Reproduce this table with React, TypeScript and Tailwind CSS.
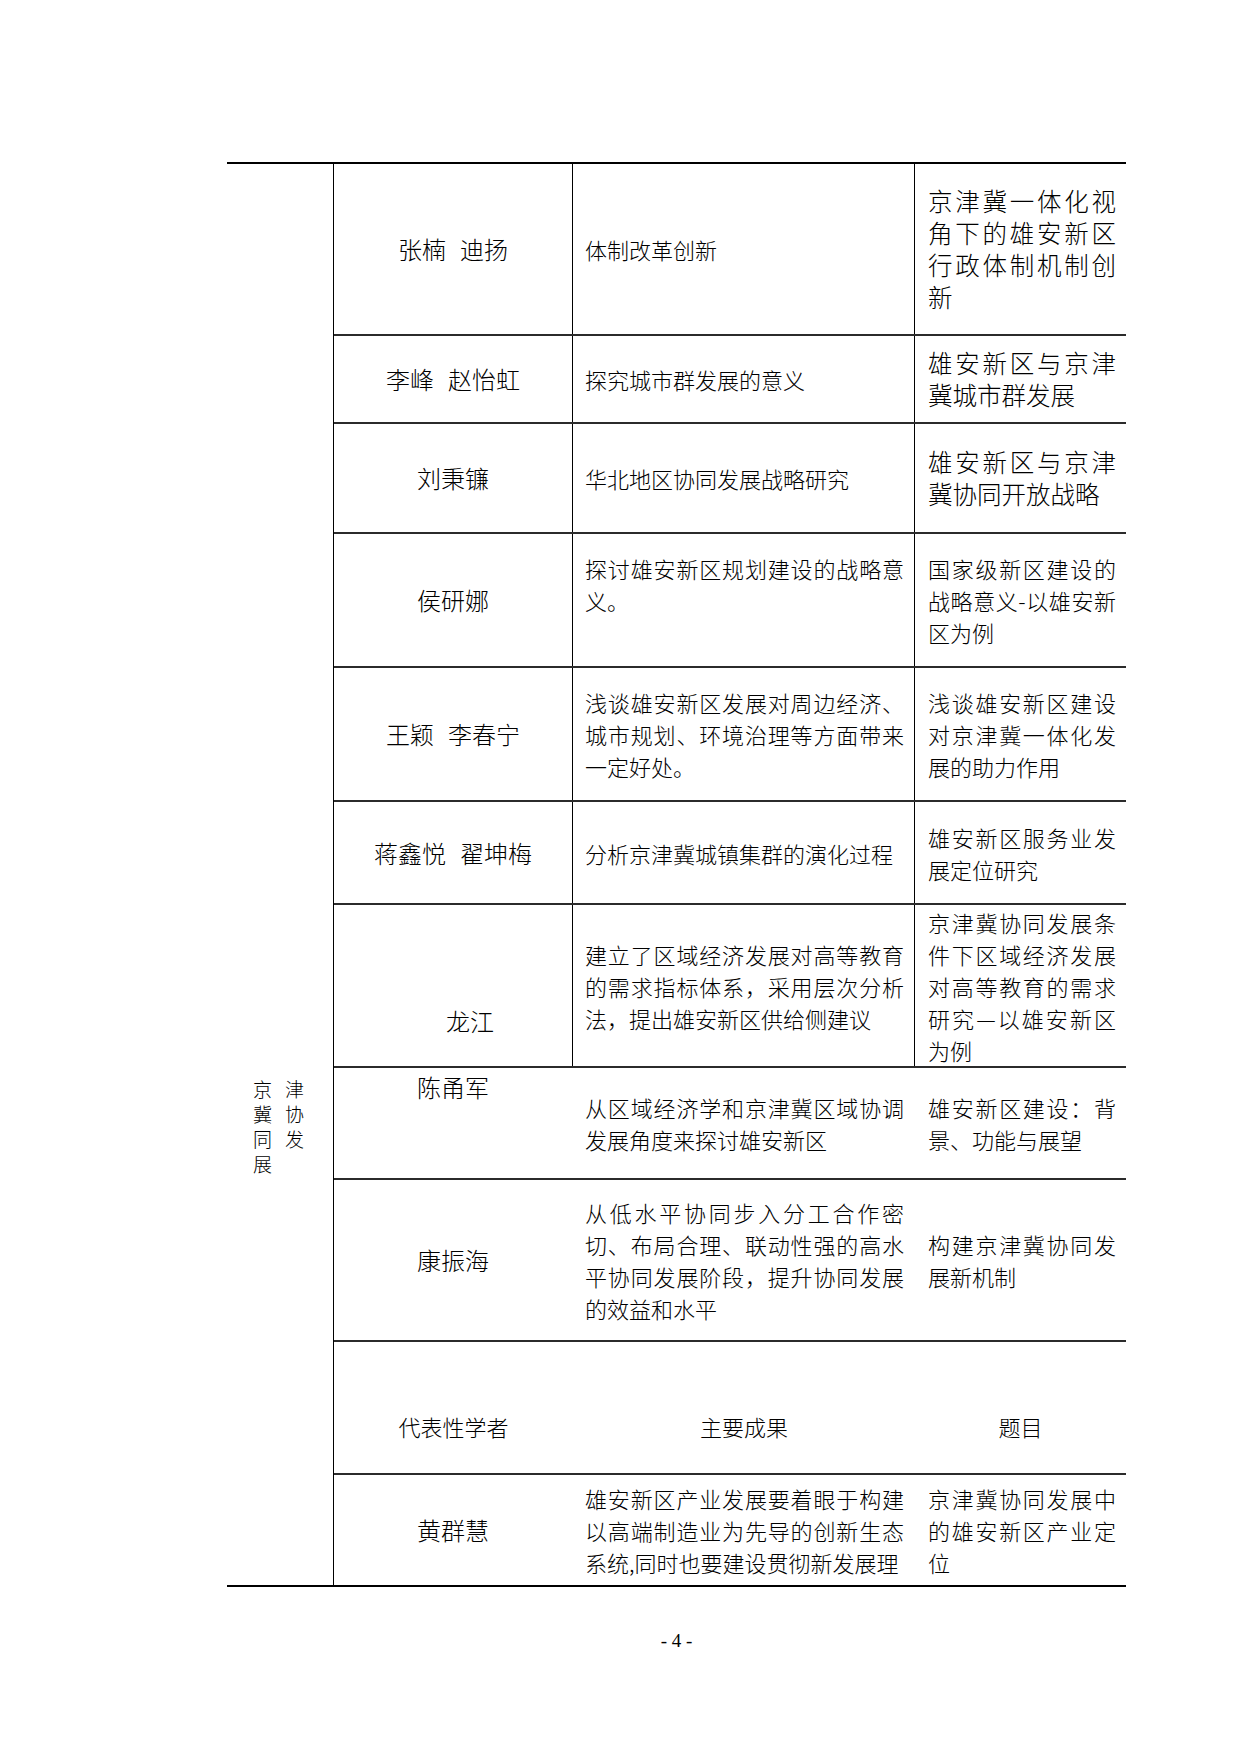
import React from "react";

type RowData = {
  h: string;
  name: React.ReactNode;
  nameCls: string;
  c3: string[];
  c4: string[];
  big?: boolean;
  v: boolean;
  last?: boolean;
};

const Gap = () => <span className="inline-block w-[14px]" />;

const rows: RowData[] = [
  {
    h: "h-[172px]",
    name: (
      <span>
        张楠<Gap />迪扬
      </span>
    ),
    nameCls: "justify-center",
    c3: ["体制改革创新"],
    c4: ["京津冀一体化视", "角下的雄安新区", "行政体制机制创", "新"],
    big: true,
    v: true,
  },
  {
    h: "h-[88px]",
    name: (
      <span>
        李峰<Gap />赵怡虹
      </span>
    ),
    nameCls: "justify-center",
    c3: ["探究城市群发展的意义"],
    c4: ["雄安新区与京津", "冀城市群发展"],
    big: true,
    v: true,
  },
  {
    h: "h-[110px]",
    name: "刘秉镰",
    nameCls: "justify-center",
    c3: ["华北地区协同发展战略研究"],
    c4: ["雄安新区与京津", "冀协同开放战略"],
    big: true,
    v: true,
  },
  {
    h: "h-[134px]",
    name: "侯研娜",
    nameCls: "justify-center",
    c3: ["探讨雄安新区规划建设的战略意", "义。", ""],
    c4: ["国家级新区建设的", "战略意义-以雄安新", "区为例"],
    v: true,
  },
  {
    h: "h-[134px]",
    name: (
      <span>
        王颖<Gap />李春宁
      </span>
    ),
    nameCls: "justify-center",
    c3: ["浅谈雄安新区发展对周边经济、", "城市规划、环境治理等方面带来", "一定好处。"],
    c4: ["浅谈雄安新区建设", "对京津冀一体化发", "展的助力作用"],
    v: true,
  },
  {
    h: "h-[103px]",
    name: (
      <span>
        蒋鑫悦<Gap />翟坤梅
      </span>
    ),
    nameCls: "justify-center",
    c3: ["分析京津冀城镇集群的演化过程"],
    c4: ["雄安新区服务业发", "展定位研究"],
    v: true,
  },
  {
    h: "h-[163px]",
    name: "龙江",
    nameCls: "justify-start pt-[100px] pl-[34px]",
    c3: ["建立了区域经济发展对高等教育", "的需求指标体系，采用层次分析", "法，提出雄安新区供给侧建议"],
    c4: ["京津冀协同发展条", "件下区域经济发展", "对高等教育的需求", "研究—以雄安新区", "为例"],
    v: true,
  },
  {
    h: "h-[112px]",
    name: "陈甬军",
    nameCls: "justify-start pt-[3px]",
    c3: ["从区域经济学和京津冀区域协调", "发展角度来探讨雄安新区"],
    c4: ["雄安新区建设：背", "景、功能与展望"],
    v: false,
  },
  {
    h: "h-[162px]",
    name: "康振海",
    nameCls: "justify-center",
    c3: ["从低水平协同步入分工合作密", "切、布局合理、联动性强的高水", "平协同发展阶段，提升协同发展", "的效益和水平"],
    c4: ["构建京津冀协同发", "展新机制"],
    v: false,
  },
];

const lastRow: RowData = {
  h: "h-[110px]",
  name: "黄群慧",
  nameCls: "justify-center",
  c3: ["雄安新区产业发展要着眼于构建", "以高端制造业为先导的创新生态", "系统,同时也要建设贯彻新发展理"],
  c4: ["京津冀协同发展中", "的雄安新区产业定", "位"],
  v: false,
  last: true,
};

function Lines({ lines }: { lines: string[] }) {
  return (
    <>
      {lines.map((l, i) => {
        const justify = i < lines.length - 1 && lines[i + 1] !== "";
        return (
          <div
            key={i}
            className={
              justify
                ? "h-[32px] text-justify [text-align-last:justify]"
                : "h-[32px] text-left"
            }
          >
            {l}
          </div>
        );
      })}
    </>
  );
}

function Row({ r }: { r: RowData }) {
  return (
    <div
      className={
        r.last
          ? `${r.h} grid grid-cols-[239px_342px_211px]`
          : `${r.h} grid grid-cols-[239px_342px_211px] border-b-2 border-[#2b2b2b]`
      }
    >
      <div
        className={
          r.v
            ? `border-r border-black flex flex-col items-center text-[24px] leading-[32px] ${r.nameCls}`
            : `border-r border-transparent flex flex-col items-center text-[24px] leading-[32px] ${r.nameCls}`
        }
      >
        <div>{r.name}</div>
      </div>
      <div
        className={
          r.v
            ? "border-r border-black flex flex-col justify-center pl-[12px] pr-[10px] text-[22px] leading-[32px]"
            : "border-r border-transparent flex flex-col justify-center pl-[12px] pr-[10px] text-[22px] leading-[32px]"
        }
      >
        <Lines lines={r.c3} />
      </div>
      <div
        className={
          r.big
            ? "flex flex-col justify-center pl-[13px] pr-[10px] text-[24.5px] leading-[32px]"
            : "flex flex-col justify-center pl-[13px] pr-[10px] text-[22px] leading-[32px]"
        }
      >
        <Lines lines={r.c4} />
      </div>
    </div>
  );
}

export default function App() {
  return (
    <div className="w-[1240px] h-[1754px] bg-white text-black font-['Noto_Sans_CJK_SC','Noto_Sans',sans-serif] font-light pt-[162px] pl-[227px]">
      <div className="w-[899px] flex border-t-2 border-b-2 border-black">
        <div className="w-[107px] shrink-0 border-r border-black pt-[912px] pl-[26px]">
          <div className="w-[51px] text-[19px] leading-[25px]">
            <div className="flex justify-between">
              <span>京</span>
              <span>津</span>
            </div>
            <div className="flex justify-between">
              <span>冀</span>
              <span>协</span>
            </div>
            <div className="flex justify-between">
              <span>同</span>
              <span>发</span>
            </div>
            <div>展</div>
          </div>
        </div>
        <div className="flex-1 flex flex-col">
          {rows.map((r, i) => (
            <Row key={i} r={r} />
          ))}
          <div className="h-[133px] grid grid-cols-[239px_342px_211px] border-b-2 border-[#2b2b2b] text-[22px] leading-[32px]">
            <div className="pt-[68px] text-center">代表性学者</div>
            <div className="pt-[68px] text-center">主要成果</div>
            <div className="pt-[68px] text-center">题目</div>
          </div>
          <Row r={lastRow} />
        </div>
      </div>
      <div className="w-[899px] mt-[42px] text-center font-['Liberation_Serif',serif] text-[19px] leading-[24px]">
        - 4 -
      </div>
    </div>
  );
}
